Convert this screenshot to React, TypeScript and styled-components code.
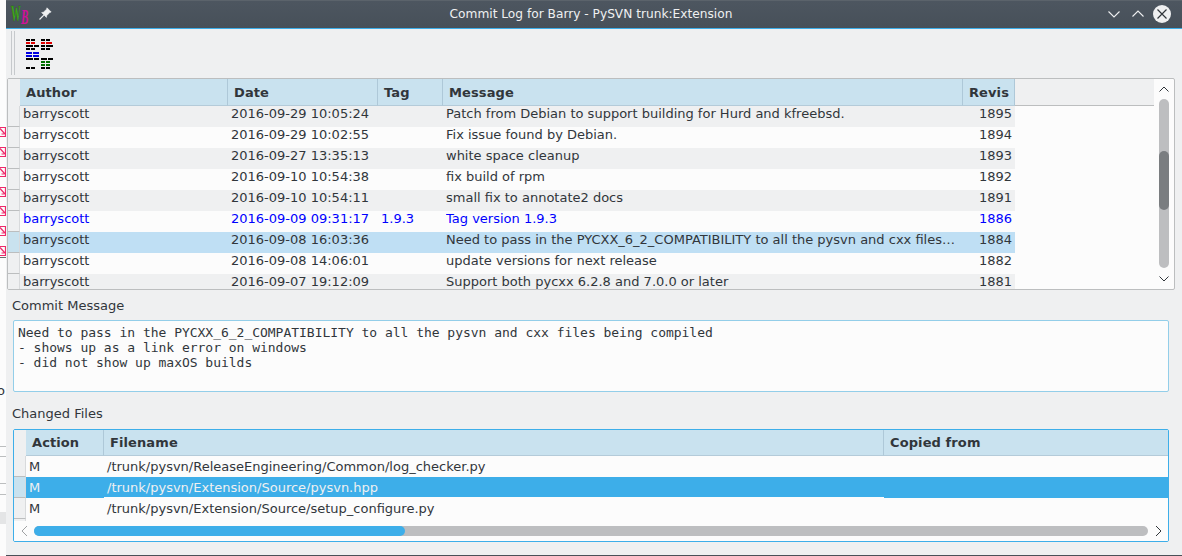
import React from "react";
import styled, { createGlobalStyle } from "styled-components";

const Global = createGlobalStyle`
  html, body { margin: 0; padding: 0; width: 1182px; height: 556px; overflow: hidden; background: #fcfcfc; }
  * { box-sizing: border-box; }
  body { font-family: "DejaVu Sans", sans-serif; font-size: 13px; color: #31363b; }
`;

const Screen = styled.div`
  display: flex;
  width: 1182px;
  height: 556px;
  overflow: hidden;
`;

const Behind = styled.div`
  width: 6px;
  flex: none;
  position: relative;
  overflow: hidden;
  background: #fcfcfc;
`;
const BehindIcon = styled.svg<{ $top: number }>`
  position: absolute;
  left: 0;
  top: ${(p) => p.$top}px;
`;
const BehindText = styled.span`
  position: absolute;
  left: -3px;
  top: 383px;
  font-size: 13px;
  line-height: 16px;
`;
const BehindBand = styled.div<{ $top: number; $h: number; $bg: string }>`
  position: absolute;
  left: 0;
  right: 0;
  top: ${(p) => p.$top}px;
  height: ${(p) => p.$h}px;
  background: ${(p) => p.$bg};
`;

const Window = styled.div`
  flex: 1;
  min-width: 0;
  display: flex;
  flex-direction: column;
  background: #eff0f1;
  border-bottom: 1px solid #4a5158;
`;
const TitleBar = styled.div`
  height: 29px;
  flex: none;
  position: relative;
  display: flex;
  align-items: center;
  padding: 0 11px 2px 5px;
  background: linear-gradient(#4d5660, #475059);
  border-top: 1px solid #5b636b;
  border-bottom: 1px solid #3daee9;
  color: #eff0f1;
`;
const Title = styled.div`
  position: absolute;
  left: 0;
  right: 6px;
  top: 5px;
  text-align: center;
  font-size: 12.2px;
  line-height: 16px;
`;
const Logo = styled.svg`
  margin-right: 9px;
  overflow: visible;
`;
const TitleRight = styled.div`
  margin-left: auto;
  display: flex;
  align-items: center;
  gap: 10px;
`;
const CloseBtn = styled.div`
  width: 18px;
  height: 18px;
  border-radius: 50%;
  background: #eff0f1;
  display: flex;
  align-items: center;
  justify-content: center;
  margin-left: -2px;
`;

const ToolBar = styled.div`
  height: 49px;
  flex: none;
  display: flex;
  padding: 2px 0 0 5px;
  gap: 11px;
`;
const Grip = styled.div`
  width: 4px;
  height: 44px;
  border-left: 1px solid #c6c9cc;
  border-right: 1px solid #c6c9cc;
`;
const ToolIcon = styled.svg`
  margin-top: 8px;
`;

const Content = styled.div`
  flex: 1;
  min-height: 0;
  display: flex;
  flex-direction: column;
  padding: 0 7px 0 1px;
`;

const TablePanel = styled.div<{ $focus?: boolean; $h: number }>`
  height: ${(p) => p.$h}px;
  flex: none;
  display: grid;
  background: #fcfcfc;
  border: 1px solid ${(p) => (p.$focus ? "#3daee9" : "#bcbebf")};
  border-radius: 2px;
  overflow: hidden;
`;
const LogGrid = styled(TablePanel)`
  grid-template-columns: 1fr 20px;
`;
const FileGrid = styled(TablePanel)`
  grid-template-rows: 1fr 20px;
  margin: 0 6px;
`;
const TableArea = styled.div`
  min-width: 0;
  overflow: hidden;
`;
const HeaderRow = styled.div<{ $cols: string; $h: number }>`
  display: grid;
  grid-template-columns: ${(p) => p.$cols};
  height: ${(p) => p.$h}px;
`;
const Corner = styled.div`
  background: #eff0f1;
`;
const HeaderCell = styled.div`
  background: #c9e2ef;
  border-right: 1px solid #aec8d8;
  border-bottom: 1px solid #b4cbd9;
  font-weight: bold;
  color: #31363b;
  padding-left: 6px;
  display: flex;
  align-items: center;
  font-size: 13px;
  letter-spacing: 0.1px;
`;
const HeaderFill = styled.div`
  background: #eff0f1;
  border-bottom: 1px solid #bcbebf;
`;
const HeaderFillFile = styled(HeaderCell)`
  border-right: none;
`;

const Row = styled.div<{ $cols: string; $h: number; $lh: number }>`
  display: grid;
  grid-template-columns: ${(p) => p.$cols};
  height: ${(p) => p.$h}px;
  line-height: ${(p) => p.$lh}px;
`;
const RowHead = styled.div<{ $sel?: boolean }>`
  background: ${(p) => (p.$sel ? "#c9e2ef" : "#eff0f1")};
  border-bottom: 1px solid #bcbebf;
  border-right: 1px solid #d8dadc;
`;
const Cell = styled.div<{ $bg: string; $color: string; $right?: boolean; $underline?: boolean }>`
  background: ${(p) => p.$bg};
  color: ${(p) => p.$color};
  padding: 0 3px;
  white-space: nowrap;
  overflow: hidden;
  font-size: 13px;
  text-align: ${(p) => (p.$right ? "right" : "left")};
  border-bottom: ${(p) => (p.$underline ? "1px solid #fcfcfc" : "none")};
`;
const MessageText = styled.span`
  display: block;
  overflow: hidden;
  text-overflow: ellipsis;
  padding-right: 2px;
`;

const VBar = styled.div`
  display: flex;
  flex-direction: column;
  align-items: center;
  padding-top: 6px;
`;
const VTrack = styled.div`
  width: 10px;
  height: 169px;
  margin-top: 6px;
  border-radius: 5px;
  background: #bdbec0;
  flex: none;
  display: flex;
  flex-direction: column;
  padding-top: 52px;
`;
const VThumb = styled.div`
  height: 59px;
  border-radius: 5px;
  background: #7a7d80;
`;
const VBottom = styled.svg`
  margin-top: 7px;
`;

const SectionLabel = styled.div<{ $top: number; $bottom: number }>`
  padding-left: 5px;
  margin-top: ${(p) => p.$top}px;
  margin-bottom: ${(p) => p.$bottom}px;
  line-height: 16px;
  font-size: 13px;
  color: #31363b;
`;
const MessageBox = styled.div`
  height: 72px;
  flex: none;
  margin: 0 6px;
  background: #fcfcfc;
  border: 1px solid #93cee9;
  border-radius: 2px;
  padding: 4px 4px;
  font-family: "DejaVu Sans Mono", monospace;
  font-size: 13px;
  letter-spacing: -0.02px;
  line-height: 15px;
  color: #31363b;
  white-space: pre;
`;
const HBar = styled.div`
  display: flex;
  align-items: center;
  padding: 0 6px;
  background: #fcfcfc;
  gap: 6px;
`;
const HTrack = styled.div`
  flex: 1;
  height: 10px;
  border-radius: 5px;
  background: #bdbec0;
`;
const HThumb = styled.div`
  width: 371px;
  height: 10px;
  border-radius: 5px;
  background: #3daee9;
`;
const FileInner = styled.div`
  min-height: 0;
  overflow: hidden;
`;

const logCols = "12px 208px 150px 65px 520px 52px 1fr";
const logHead = ["Author", "Date", "Tag", "Message", "Revis"];
const logRows = [
  ["barryscott", "2016-09-29 10:05:24", "", "Patch from Debian to support building for Hurd and kfreebsd.", "1895"],
  ["barryscott", "2016-09-29 10:02:55", "", "Fix issue found by Debian.", "1894"],
  ["barryscott", "2016-09-27 13:35:13", "", "white space cleanup", "1893"],
  ["barryscott", "2016-09-10 10:54:38", "", "fix build of rpm", "1892"],
  ["barryscott", "2016-09-10 10:54:11", "", "small fix to annotate2 docs", "1891"],
  ["barryscott", "2016-09-09 09:31:17", "1.9.3", "Tag version 1.9.3", "1886"],
  ["barryscott", "2016-09-08 16:03:36", "", "Need to pass in the PYCXX_6_2_COMPATIBILITY to all the pysvn and cxx files being compiled", "1884"],
  ["barryscott", "2016-09-08 14:06:01", "", "update versions for next release", "1882"],
  ["barryscott", "2016-09-07 19:12:09", "", "Support both pycxx 6.2.8 and 7.0.0 or later", "1881"],
];
const fileCols = "12px 78px 780px 1fr";
const fileRows = [
  ["M", "/trunk/pysvn/ReleaseEngineering/Common/log_checker.py"],
  ["M", "/trunk/pysvn/Extension/Source/pysvn.hpp"],
  ["M", "/trunk/pysvn/Extension/Source/setup_configure.py"],
];

const iconTops = [126, 146, 166, 186, 205, 225, 245];

type Bar = [number, number, number, string];
const K = "#000000";
const R = "#e00000";
const B = "#0000e0";
const G = "#006f00";
/* each bar: [x, y, width, colour] */
const iconBars: Bar[] = [
  [0, 0, 4, K], [5, 0, 4, K], [15, 0, 4, K], [20, 0, 4, K],
  [0, 3, 4, R], [5, 3, 4, R], [15, 3, 4, R], [20, 3, 6, R],
  [0, 6, 7, K], [8, 6, 5, K], [15, 6, 4, K], [20, 6, 7, K],
  [0, 9, 4, K], [5, 9, 4, K], [15, 9, 4, K], [20, 9, 4, K],
  [0, 13, 6, B], [7, 13, 6, B],
  [0, 16, 6, B], [7, 16, 6, B],
  [0, 19, 7, K], [8, 19, 5, K], [15, 19, 6, K], [22, 19, 5, K],
  [15, 22, 4, G], [20, 22, 4, G],
  [15, 25, 4, G], [20, 25, 4, G],
  [0, 28, 4, K], [5, 28, 4, K], [15, 28, 4, K], [20, 28, 4, K],
];

export default function App() {
  return (
    <Screen>
      <Global />
      <Behind>
        {iconTops.map((t) => (
          <BehindIcon key={t} $top={t} width="6" height="12" viewBox="0 0 6 12">
            <path d="M0 1.5H5.5V10.5H0" stroke="#ee2a6a" strokeWidth="1.2" fill="none" />
            <path d="M0 2.5L5 8M1.5 8H4.5" stroke="#ee2a6a" strokeWidth="1.2" fill="none" />
          </BehindIcon>
        ))}
        <BehindBand $top={257} $h={1} $bg="#6a6d70" />
        <BehindText>o</BehindText>
        <BehindBand $top={446} $h={1} $bg="#bcbebf" />
        <BehindBand $top={456} $h={1} $bg="#bcbebf" />
        <BehindBand $top={483} $h={1} $bg="#bcbebf" />
        <BehindBand $top={494} $h={1} $bg="#bcbebf" />
        <BehindBand $top={512} $h={12} $bg="#e4e5e6" />
      </Behind>
      <Window>
        <TitleBar>
          <Logo width="18" height="20" viewBox="0 0 18 20">
            <text transform="translate(0 17) scale(0.65 1.5)" fontFamily="Liberation Serif, serif" fontWeight="bold" fontSize="15" fill="#3fa81a" stroke="#1f6a0a" strokeWidth="0.2">W</text>
            <text transform="translate(10 20) scale(0.85 1.6)" fontFamily="Liberation Serif, serif" fontWeight="bold" fontStyle="italic" fontSize="13" fill="#d0109a">B</text>
          </Logo>
          <svg width="14" height="14" viewBox="0 0 14 14">
            <path d="M9 0.8L13.2 5L11.8 5.4L8.8 8.6L8.4 10.4L3.6 5.6L5.4 5.2L8.6 2.2Z" fill="#eff0f1" stroke="#eff0f1" strokeWidth="0.6" strokeLinejoin="round" />
            <path d="M5.8 8.2L1.5 12.5" stroke="#eff0f1" strokeWidth="1.2" fill="none" />
          </svg>
          <Title>Commit Log for Barry - PySVN trunk:Extension</Title>
          <TitleRight>
            <svg width="14" height="14" viewBox="0 0 14 14">
              <path d="M1.5 4.5l5.5 5.5 5.5-5.5" stroke="#eff0f1" strokeWidth="1.1" fill="none" />
            </svg>
            <svg width="14" height="14" viewBox="0 0 14 14">
              <path d="M1.5 9.5l5.5-5.5 5.5 5.5" stroke="#eff0f1" strokeWidth="1.1" fill="none" />
            </svg>
            <CloseBtn>
              <svg width="12" height="12" viewBox="0 0 12 12">
                <path d="M1.5 1.5l9 9M10.5 1.5l-9 9" stroke="#31363b" strokeWidth="1.2" />
              </svg>
            </CloseBtn>
          </TitleRight>
        </TitleBar>
        <ToolBar>
          <Grip />
          <ToolIcon width="28" height="30" viewBox="0 0 28 30" shapeRendering="crispEdges">
            {iconBars.map(([x, y, w, c], i) => (
              <rect key={i} x={x} y={y} width={w} height={2} fill={c} />
            ))}
          </ToolIcon>
        </ToolBar>
        <Content>
          <LogGrid $h={212}>
            <TableArea>
              <HeaderRow $cols={logCols} $h={27}>
                <Corner />
                {logHead.map((h) => (
                  <HeaderCell key={h}>{h}</HeaderCell>
                ))}
                <HeaderFill />
              </HeaderRow>
              {logRows.map((r, i) => {
                const sel = i === 6;
                const bg = sel ? "#bfdff4" : i % 2 === 0 ? "#eff0f1" : "#fcfcfc";
                const color = i === 5 ? "#0000ff" : "#31363b";
                return (
                  <Row key={i} $cols={logCols} $h={21} $lh={15}>
                    <RowHead $sel={sel} />
                    <Cell $bg={bg} $color={color}>{r[0]}</Cell>
                    <Cell $bg={bg} $color={color}>{r[1]}</Cell>
                    <Cell $bg={bg} $color={color}>{r[2]}</Cell>
                    <Cell $bg={bg} $color={color}>
                      <MessageText>{r[3]}</MessageText>
                    </Cell>
                    <Cell $bg={bg} $color={color} $right>{r[4]}</Cell>
                  </Row>
                );
              })}
            </TableArea>
            <VBar>
              <svg width="12" height="8" viewBox="0 0 12 8">
                <path d="M1.5 6.5l4.5-4.5 4.5 4.5" stroke="#31363b" fill="none" />
              </svg>
              <VTrack>
                <VThumb />
              </VTrack>
              <VBottom width="12" height="8" viewBox="0 0 12 8">
                <path d="M1.5 1.5l4.5 4.5 4.5-4.5" stroke="#31363b" fill="none" />
              </VBottom>
            </VBar>
          </LogGrid>
          <SectionLabel $top={8} $bottom={6}>Commit Message</SectionLabel>
          <MessageBox>{"Need to pass in the PYCXX_6_2_COMPATIBILITY to all the pysvn and cxx files being compiled\n- shows up as a link error on windows\n- did not show up maxOS builds"}</MessageBox>
          <SectionLabel $top={14} $bottom={7}>Changed Files</SectionLabel>
          <FileGrid $focus $h={113}>
            <FileInner>
              <HeaderRow $cols={fileCols} $h={26}>
                <Corner />
                <HeaderCell>Action</HeaderCell>
                <HeaderCell>Filename</HeaderCell>
                <HeaderFillFile>Copied from</HeaderFillFile>
              </HeaderRow>
              {fileRows.map((r, i) => {
                const sel = i === 1;
                const bg = sel ? "#3daee9" : "#fcfcfc";
                const color = sel ? "#eff0f1" : "#31363b";
                return (
                  <Row key={i} $cols={fileCols} $h={21} $lh={21}>
                    <RowHead $sel={sel} />
                    <Cell $bg={bg} $color={color}>{r[0]}</Cell>
                    <Cell $bg={bg} $color={color} $underline={sel}>{r[1]}</Cell>
                    <Cell $bg={bg} $color={color} />
                  </Row>
                );
              })}
              <Row $cols={fileCols} $h={21} $lh={21}>
                <RowHead />
              </Row>
            </FileInner>
            <HBar>
              <svg width="8" height="12" viewBox="0 0 8 12">
                <path d="M7 1L2 6l5 5" stroke="#a0a2a4" fill="none" />
              </svg>
              <HTrack>
                <HThumb />
              </HTrack>
              <svg width="8" height="12" viewBox="0 0 8 12">
                <path d="M2 1l5 5-5 5" stroke="#31363b" fill="none" />
              </svg>
            </HBar>
          </FileGrid>
        </Content>
      </Window>
    </Screen>
  );
}
